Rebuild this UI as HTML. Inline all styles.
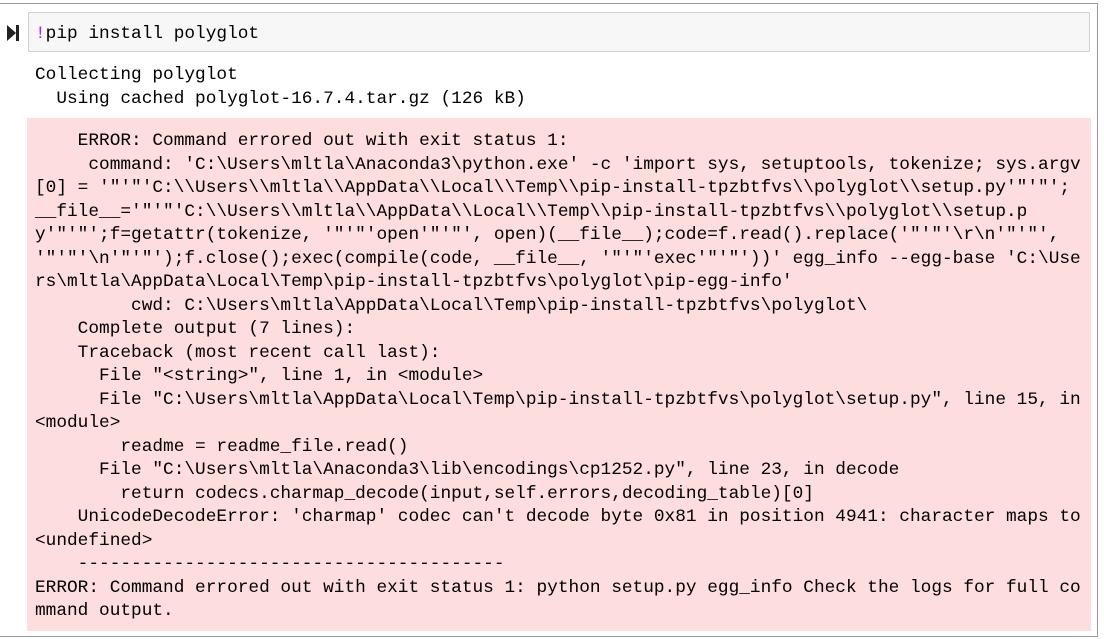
<!DOCTYPE html>
<html><head><style>
body{margin:0;width:1104px;height:639px;background:#fff;position:relative;overflow:hidden;font-family:"Liberation Mono",monospace;font-size:17.8px;color:#000}
.frame{position:absolute;left:-2px;top:3px;width:1099px;height:632px;border:1px solid #9a9a9a;border-left:none}
.inp{position:absolute;left:28px;top:12px;width:1060px;height:38px;background:#f7f7f7;border:1px solid #cfcfcf;border-radius:2px}
.inp span{position:absolute;left:6px;top:10px;line-height:23.5px;white-space:pre}
pre{margin:0;font:inherit;line-height:23.5px;white-space:pre}
.out{position:absolute;left:35px;top:64px}
.err{position:absolute;left:27px;top:118px;width:1064px;height:513px;background:#fddddd}
.err pre{position:absolute;left:8px;top:12px}
</style></head><body>
<div class="frame"></div>
<svg style="position:absolute;left:7px;top:25px" width="13" height="16"><polygon points="0,0 9,8 0,16" fill="#222"/><rect x="9" y="0" width="3" height="16" fill="#222"/></svg>
<div class="inp"><span><span style="position:static;color:#aa22ff">!</span>pip install polyglot</span></div>
<pre class="out">Collecting polyglot
  Using cached polyglot-16.7.4.tar.gz (126 kB)</pre>
<div class="err"><pre>    ERROR: Command errored out with exit status 1:
     command: 'C:\Users\mltla\Anaconda3\python.exe' -c 'import sys, setuptools, tokenize; sys.argv
[0] = '"'"'C:\\Users\\mltla\\AppData\\Local\\Temp\\pip-install-tpzbtfvs\\polyglot\\setup.py'"'"';
__file__='"'"'C:\\Users\\mltla\\AppData\\Local\\Temp\\pip-install-tpzbtfvs\\polyglot\\setup.p
y'"'"';f=getattr(tokenize, '"'"'open'"'"', open)(__file__);code=f.read().replace('"'"'\r\n'"'"',
'"'"'\n'"'"');f.close();exec(compile(code, __file__, '"'"'exec'"'"'))' egg_info --egg-base 'C:\Use
rs\mltla\AppData\Local\Temp\pip-install-tpzbtfvs\polyglot\pip-egg-info'
         cwd: C:\Users\mltla\AppData\Local\Temp\pip-install-tpzbtfvs\polyglot\
    Complete output (7 lines):
    Traceback (most recent call last):
      File "&lt;string&gt;", line 1, in &lt;module&gt;
      File "C:\Users\mltla\AppData\Local\Temp\pip-install-tpzbtfvs\polyglot\setup.py", line 15, in
&lt;module&gt;
        readme = readme_file.read()
      File "C:\Users\mltla\Anaconda3\lib\encodings\cp1252.py", line 23, in decode
        return codecs.charmap_decode(input,self.errors,decoding_table)[0]
    UnicodeDecodeError: 'charmap' codec can't decode byte 0x81 in position 4941: character maps to
&lt;undefined&gt;
    ----------------------------------------
ERROR: Command errored out with exit status 1: python setup.py egg_info Check the logs for full co
mmand output.</pre></div>
</body></html>
